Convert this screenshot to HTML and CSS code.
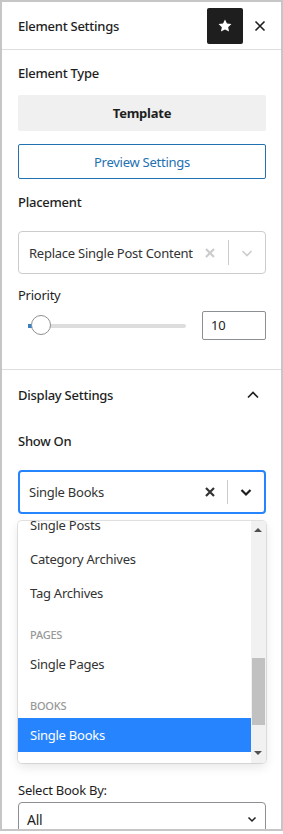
FILE: index.html
```html
<!DOCTYPE html>
<html lang="en">
<head>
    <meta charset="UTF-8">
    <meta name="viewport" content="width=device-width, initial-scale=1.0">
    <title>Element Settings</title>
    <link rel="stylesheet" href="styles.css">
</head>
<body>
    <div class="panel">
        <div class="panel-header">
            <span class="panel-title">Element Settings</span>
            <button class="star-btn">
                <svg width="18" height="18" viewBox="0 0 24 24"><path d="M12 3.2l2.6 5.5 6 .7-4.4 4.1 1.2 5.9L12 16.5l-5.4 2.9 1.2-5.9-4.4-4.1 6-.7z" fill="#fff"/></svg>
            </button>
            <button class="close-btn">
                <svg width="14" height="14" viewBox="0 0 14 14"><path d="M2.5 2.5l9 9M11.5 2.5l-9 9" stroke="#1e1e1e" stroke-width="1.6"/></svg>
            </button>
        </div>

        <div class="section">
            <div class="label label-type">Element Type</div>
            <div class="type-box">Template</div>
            <button class="preview-btn">Preview Settings</button>

            <div class="label label-placement">Placement</div>
            <div class="select select-placement">
                <span class="select-value">Replace Single Post Content</span>
                <span class="select-clear">
                    <svg width="14" height="14" viewBox="0 0 14 14"><path d="M3 3l8 8M11 3l-8 8" stroke="#ccc" stroke-width="2.2"/></svg>
                </span>
                <span class="select-sep"></span>
                <span class="select-arrow">
                    <svg width="14" height="14" viewBox="0 0 14 14"><path d="M2.5 5l4.5 4.5L11.5 5" stroke="#ccc" stroke-width="1.6" fill="none"/></svg>
                </span>
            </div>

            <div class="label-plain label-priority">Priority</div>
            <div class="range-row">
                <div class="range">
                    <div class="range-track"></div>
                    <div class="range-fill"></div>
                    <div class="range-thumb"></div>
                </div>
                <div class="number-input">10</div>
            </div>
        </div>

        <div class="section section-display">
            <div class="display-head">
                <span class="label">Display Settings</span>
                <svg width="16" height="16" viewBox="0 0 16 16"><path d="M3 10.5l5-5 5 5" stroke="#1e1e1e" stroke-width="1.6" fill="none"/></svg>
            </div>
            <div class="label label-show">Show On</div>
            <div class="select select-focus">
                <span class="select-value">Single Books</span>
                <span class="select-clear">
                    <svg width="14" height="14" viewBox="0 0 14 14"><path d="M3 3l8 8M11 3l-8 8" stroke="#333" stroke-width="2.2"/></svg>
                </span>
                <span class="select-sep"></span>
                <span class="select-arrow">
                    <svg width="14" height="14" viewBox="0 0 14 14"><path d="M2.5 5l4.5 4.5L11.5 5" stroke="#1e1e1e" stroke-width="2.2" fill="none"/></svg>
                </span>
            </div>

            <div class="menu">
                <div class="menu-list">
                    <div class="menu-inner">
                        <div class="option">Single Posts</div>
                        <div class="option">Category Archives</div>
                        <div class="option">Tag Archives</div>
                        <div class="group">
                            <div class="group-head">PAGES</div>
                            <div class="option">Single Pages</div>
                        </div>
                        <div class="group">
                            <div class="group-head">BOOKS</div>
                            <div class="option option-selected">Single Books</div>
                        </div>
                    </div>
                </div>
                <div class="scrollbar">
                    <div class="scroll-up"></div>
                    <div class="scroll-thumb"></div>
                    <div class="scroll-down"></div>
                </div>
            </div>

            <div class="label-plain label-book">Select Book By:</div>
            <div class="native-select">
                <span>All</span>
                <svg width="10" height="10" viewBox="0 0 10 10"><path d="M1.5 3.5L5 7l3.5-3.5" stroke="#1e1e1e" stroke-width="1.5" fill="none"/></svg>
            </div>
        </div>
    </div>
</body>
</html>
```

FILE: styles.css
```css
body {
    margin: 0; padding: 0; background: #fff;
    font-family: "Noto Sans", "Open Sans", sans-serif; font-size: 13px; color: #1e1e1e;
    letter-spacing: -0.25px;
}
.panel {
    width: 283px; height: 831px; box-sizing: border-box; border: 2px solid #c6c6c6;
    overflow: hidden; background: #fff;
}
.panel-header {
    height: 47px; border-bottom: 1px solid #ddd; display: flex; align-items: center;
    padding: 0 14px 0 16px;
}
.panel-title { flex: 1; font-weight: 500; }
.star-btn {
    width: 36px; height: 36px; border: none; border-radius: 2px; background: #1e1e1e;
    display: flex; align-items: center; justify-content: center; padding: 0; margin-top: 1px;
}
.close-btn {
    border: none; background: none; padding: 0; margin-left: 10px; width: 14px; height: 14px;
    display: flex;
}
.section { padding: 0 15px 29px 16px; border-bottom: 1px solid #ddd; }
.label { font-weight: 500; line-height: 20px; }
.label-plain { line-height: 20px; }
.label-type { margin-top: 13px; }
.type-box {
    margin-top: 12px; height: 36px; background: #f0f0f0; border-radius: 2px;
    display: flex; align-items: center; justify-content: center; font-weight: 700;
}
.preview-btn {
    margin-top: 13px; width: 100%; height: 35px; border: 1px solid #2271b1; border-radius: 2px;
    background: #fff; color: #2271b1; font-family: inherit; font-size: 13px; letter-spacing: -0.25px;
}
.label-placement { margin-top: 13px; }
.select {
    margin-top: 19px; height: 43px; box-sizing: border-box; border: 1px solid #ccc; border-radius: 4px;
    display: flex; align-items: center; padding-left: 10px; color: #333;
}
.select-value { flex: 1; white-space: nowrap; }
.select-clear { width: 20px; display: flex; justify-content: center; margin-right: 8px; }
.select-sep { width: 1px; align-self: stretch; margin: 8px 0; background: #ccc; }
.select-arrow { width: 36px; display: flex; justify-content: center; }
.label-priority { margin-top: 11px; }
.range-row { margin-top: 6px; display: flex; align-items: center; }
.range { position: relative; width: 158px; height: 29px; margin-left: 10px; }
.range-track { position: absolute; left: 0; right: 0; top: 13px; height: 4px; border-radius: 2px; background: #ddd; }
.range-fill { position: absolute; left: 0; width: 5px; top: 13px; height: 4px; background: #3582c4; }
.range-thumb {
    position: absolute; left: 3px; top: 4px; width: 20px; height: 20px; box-sizing: border-box;
    border: 1.5px solid #8c8f94; border-radius: 50%; background: #fff;
}
.number-input {
    margin-left: auto; width: 64px; height: 29px; box-sizing: border-box; border: 1px solid #8c8f94;
    border-radius: 2px; padding-left: 8px; line-height: 27px; font-size: 13px;
}
.section-display { border-bottom: none; }
.display-head {
    margin-top: 15px; display: flex; align-items: center; justify-content: space-between; padding-right: 5px;
}
.label-show { margin-top: 26px; }
.select-focus { height: 44px; border: 2px solid #2684ff; padding-left: 9px; }
.select-focus .select-clear { margin-right: 7px; }
.menu {
    margin-top: 7px; height: 242px; border-radius: 4px; display: flex; overflow: hidden;
    box-shadow: 0 0 0 1px rgba(0, 0, 0, 0.1), 0 4px 11px rgba(0, 0, 0, 0.1);
}
.menu-list { flex: 1; overflow: hidden; }
.menu-inner { margin-top: -13px; }
.option { height: 34px; line-height: 34px; padding-left: 12px; color: #333; white-space: nowrap; }
.option-selected { background: #2684ff; color: #fff; }
.group { padding-top: 16px; }
.group-head {
    height: 18px; line-height: 18px; margin-bottom: 3px; padding-left: 12px; font-size: 11px;
    color: #999; font-weight: 500;
}
.scrollbar { width: 15px; background: #f1f1f1; position: relative; }
.scroll-up, .scroll-down {
    position: absolute; left: 3px; width: 0; height: 0;
    border-left: 4px solid transparent; border-right: 4px solid transparent;
}
.scroll-up { top: 7px; border-bottom: 4px solid #505050; }
.scroll-down { bottom: 8px; border-top: 4px solid #505050; }
.scroll-thumb { position: absolute; left: 1px; right: 1px; top: 137px; height: 67px; background: #c1c1c1; }
.label-book { margin-top: 17px; }
.native-select {
    margin-top: 2px; height: 34px; box-sizing: border-box; border: 1px solid #8c8f94; border-radius: 4px;
    display: flex; align-items: center; justify-content: space-between; padding: 0 8px 0 8px; font-size: 14px;
}
```
